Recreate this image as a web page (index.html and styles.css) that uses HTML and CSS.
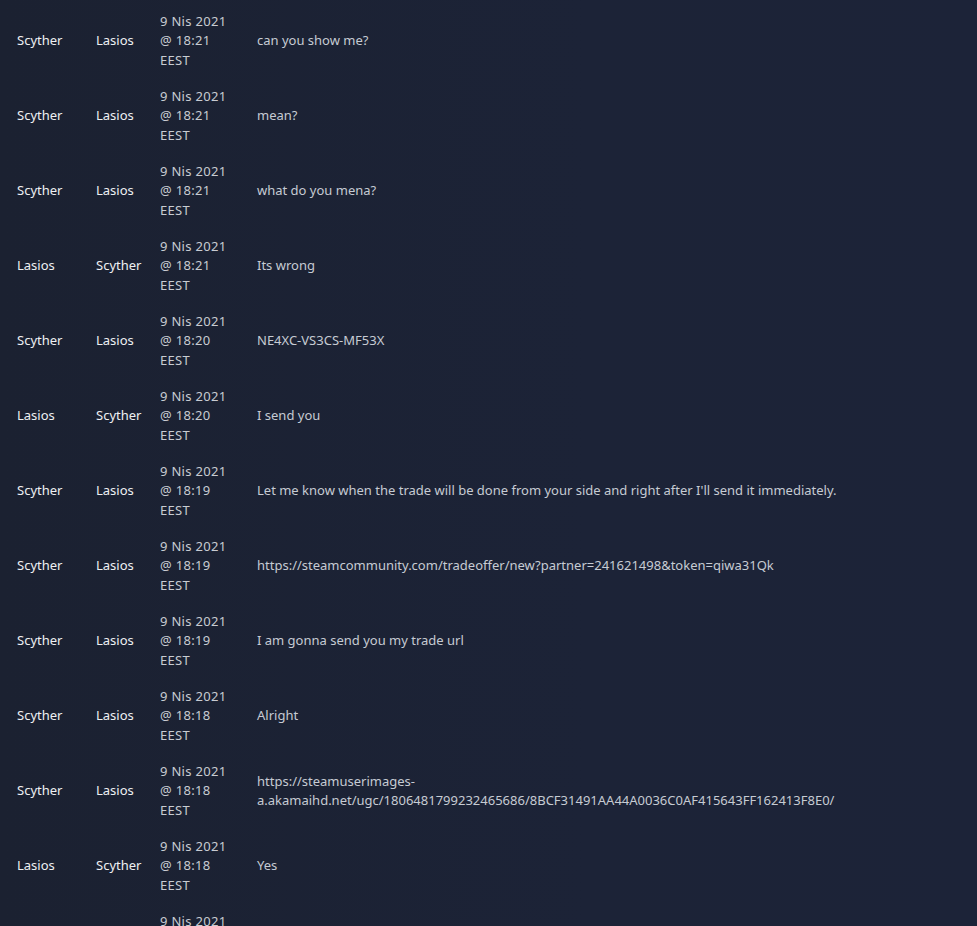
FILE: index.html
```html
<!DOCTYPE html>
<html>
<head>
<meta charset="utf-8">
<link rel="stylesheet" href="styles.css">
</head>
<body>
<div class="log">
  <div class="row"><div class="c from">Scyther</div><div class="c to">Lasios</div><div class="c date">9 Nis 2021 @ 18:21 EEST</div><div class="c msg">can you show me?</div></div>
  <div class="row"><div class="c from">Scyther</div><div class="c to">Lasios</div><div class="c date">9 Nis 2021 @ 18:21 EEST</div><div class="c msg">mean?</div></div>
  <div class="row"><div class="c from">Scyther</div><div class="c to">Lasios</div><div class="c date">9 Nis 2021 @ 18:21 EEST</div><div class="c msg">what do you mena?</div></div>
  <div class="row"><div class="c from">Lasios</div><div class="c to">Scyther</div><div class="c date">9 Nis 2021 @ 18:21 EEST</div><div class="c msg">Its wrong</div></div>
  <div class="row"><div class="c from">Scyther</div><div class="c to">Lasios</div><div class="c date">9 Nis 2021 @ 18:20 EEST</div><div class="c msg">NE4XC-VS3CS-MF53X</div></div>
  <div class="row"><div class="c from">Lasios</div><div class="c to">Scyther</div><div class="c date">9 Nis 2021 @ 18:20 EEST</div><div class="c msg">I send you</div></div>
  <div class="row"><div class="c from">Scyther</div><div class="c to">Lasios</div><div class="c date">9 Nis 2021 @ 18:19 EEST</div><div class="c msg">Let me know when the trade will be done from your side and right after I'll send it immediately.</div></div>
  <div class="row"><div class="c from">Scyther</div><div class="c to">Lasios</div><div class="c date">9 Nis 2021 @ 18:19 EEST</div><div class="c msg">https://steamcommunity.com/tradeoffer/new?partner=241621498&amp;token=qiwa31Qk</div></div>
  <div class="row"><div class="c from">Scyther</div><div class="c to">Lasios</div><div class="c date">9 Nis 2021 @ 18:19 EEST</div><div class="c msg">I am gonna send you my trade url</div></div>
  <div class="row"><div class="c from">Scyther</div><div class="c to">Lasios</div><div class="c date">9 Nis 2021 @ 18:18 EEST</div><div class="c msg">Alright</div></div>
  <div class="row"><div class="c from">Scyther</div><div class="c to">Lasios</div><div class="c date">9 Nis 2021 @ 18:18 EEST</div><div class="c msg">https://steamuserimages-a.akamaihd.net/ugc/1806481799232465686/8BCF31491AA44A0036C0AF415643FF162413F8E0/</div></div>
  <div class="row"><div class="c from">Lasios</div><div class="c to">Scyther</div><div class="c date">9 Nis 2021 @ 18:18 EEST</div><div class="c msg">Yes</div></div>
  <div class="row"><div class="c from">Scyther</div><div class="c to">Lasios</div><div class="c date">9 Nis 2021 @ 18:18 EEST</div><div class="c msg">Yes</div></div>
</div>
</body>
</html>
```

FILE: styles.css
```css
html, body {
  margin: 0;
  padding: 0;
  background: #1b2134;
  background-image: linear-gradient(90deg, #1b2131 0%, #1c2337 60%, #1c2338 100%);
  min-height: 100%;
  overflow: hidden;
}
body {
  font-family: "Noto Sans", "Open Sans", sans-serif;
  font-size: 13px;
  line-height: 19.5px;
  color: #c6cbd3;
  padding-top: 3.5px;
}
.log {
  display: flex;
  flex-direction: column;
}
.row {
  display: grid;
  grid-template-columns: 96px 64px 97px 700px;
  height: 75px;
  align-items: center;
}
.from {
  padding-left: 17px;
  color: #eef0f2;
}
.to {
  color: #eef0f2;
}
.date {
  color: #c8ccd2;
  width: 72px;
  letter-spacing: 0.3px;
}
.msg {
  color: #c6cbd3;
}
```
